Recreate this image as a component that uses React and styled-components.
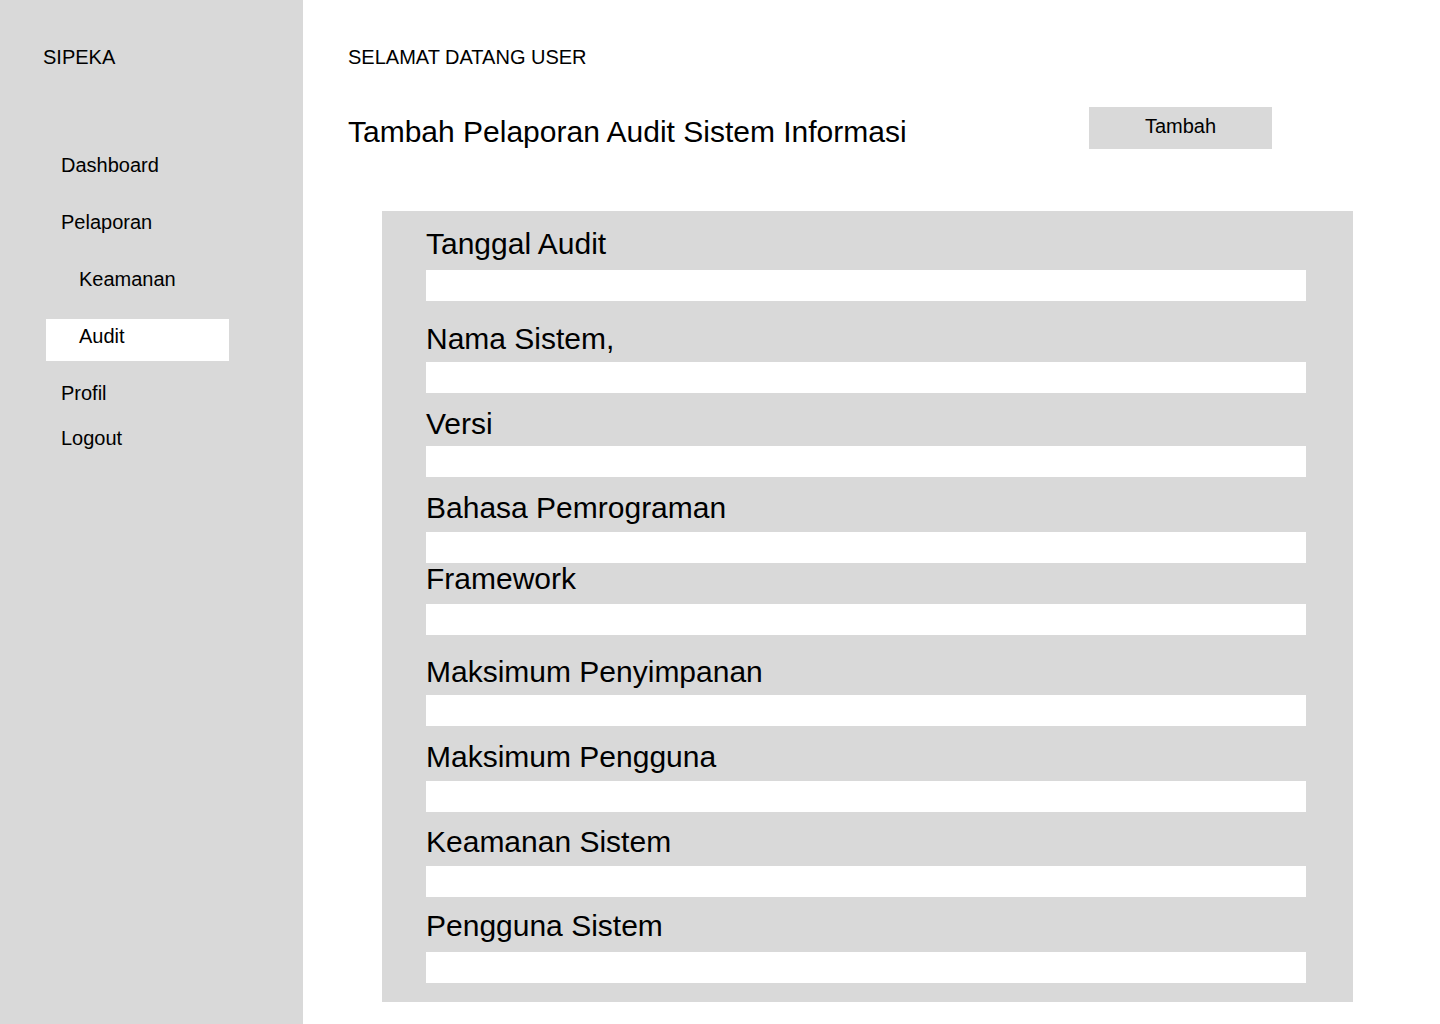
import styled, { createGlobalStyle } from "styled-components";

const GlobalStyle = createGlobalStyle`
  html, body {
    margin: 0;
    padding: 0;
    background: #fff;
  }
  body {
    font-family: "Liberation Sans", Arial, sans-serif;
    color: #000;
  }
  * {
    box-sizing: border-box;
  }
`;

const Page = styled.div`
  display: flex;
  min-height: 100vh;
`;

const Sidebar = styled.aside`
  width: 303px;
  flex-shrink: 0;
  background: #d9d9d9;
  padding-top: 45.5px;
`;

const Brand = styled.div`
  padding-left: 43px;
  font-size: 20px;
  line-height: 23px;
`;

const Nav = styled.nav`
  display: flex;
  flex-direction: column;
  padding-left: 46px;
  margin-top: 79.5px;
`;

const NavItem = styled.a`
  display: block;
  width: 183px;
  height: 42px;
  padding-top: 6px;
  padding-left: ${(p) => (p.$sub ? "33px" : "15px")};
  margin-top: ${(p) => p.$mt}px;
  font-size: 20px;
  line-height: 23px;
  color: #000;
  text-decoration: none;
  background: ${(p) => (p.$active ? "#fff" : "transparent")};
`;

const Main = styled.main`
  flex: 1;
  padding: 46px 0 0 45px;
`;

const Welcome = styled.div`
  font-size: 20px;
  line-height: 22px;
`;

const HeaderRow = styled.div`
  display: flex;
  align-items: flex-start;
  justify-content: space-between;
  width: 924px;
  margin-top: 38.5px;
`;

const Title = styled.h1`
  margin: 8px 0 0;
  font-size: 30px;
  font-weight: 400;
  line-height: 34px;
`;

const AddButton = styled.button`
  width: 183px;
  height: 42px;
  padding: 8.1px 0 11.9px;
  border: none;
  background: #d9d9d9;
  font-family: inherit;
  font-size: 20px;
  line-height: 22px;
  color: #000;
  text-align: center;
  cursor: pointer;
`;

const FormPanel = styled.form`
  width: 971px;
  height: 791px;
  margin: 62.3px 0 0 34px;
  padding: 16.2px 0 0 44px;
  background: #d9d9d9;
`;

const Field = styled.div`
  display: flex;
  flex-direction: column;
  margin-top: ${(p) => p.$mt}px;
`;

const Label = styled.label`
  font-size: 30px;
  line-height: 33px;
`;

const Input = styled.input`
  width: 880px;
  height: 31px;
  margin-top: ${(p) => p.$gap}px;
  border: none;
  outline: none;
  padding: 0 8px;
  background: #fff;
  font-family: inherit;
  font-size: 18px;
`;

const navItems = [
  { label: "Dashboard", mt: 0 },
  { label: "Pelaporan", mt: 15 },
  { label: "Keamanan", mt: 14.6, sub: true },
  { label: "Audit", mt: 15.4, sub: true, active: true },
  { label: "Profil", mt: 15 },
  { label: "Logout", mt: 2.6 },
];

const fields = [
  { label: "Tanggal Audit", mt: 0, gap: 9.8 },
  { label: "Nama Sistem,", mt: 21.2, gap: 6.8 },
  { label: "Versi", mt: 13.75, gap: 6.25 },
  { label: "Bahasa Pemrograman", mt: 14.45, gap: 7.55 },
  { label: "Framework", mt: -0.55, gap: 8.55 },
  { label: "Maksimum Penyimpanan", mt: 20.15, gap: 6.85 },
  { label: "Maksimum Pengguna", mt: 14.75, gap: 7.25 },
  { label: "Keamanan Sistem", mt: 13.15, gap: 7.85 },
  { label: "Pengguna Sistem", mt: 12.75, gap: 9.25 },
];

export default function App() {
  return (
    <>
      <GlobalStyle />
      <Page>
        <Sidebar>
          <Brand>SIPEKA</Brand>
          <Nav>
            {navItems.map((item) => (
              <NavItem
                key={item.label}
                href="#"
                $mt={item.mt}
                $sub={item.sub}
                $active={item.active}
              >
                {item.label}
              </NavItem>
            ))}
          </Nav>
        </Sidebar>
        <Main>
          <Welcome>SELAMAT DATANG USER</Welcome>
          <HeaderRow>
            <Title>Tambah Pelaporan Audit Sistem Informasi</Title>
            <AddButton type="button">Tambah</AddButton>
          </HeaderRow>
          <FormPanel onSubmit={(e) => e.preventDefault()}>
            {fields.map((f, i) => (
              <Field key={f.label} $mt={f.mt}>
                <Label htmlFor={`field-${i}`}>{f.label}</Label>
                <Input id={`field-${i}`} type="text" $gap={f.gap} />
              </Field>
            ))}
          </FormPanel>
        </Main>
      </Page>
    </>
  );
}
